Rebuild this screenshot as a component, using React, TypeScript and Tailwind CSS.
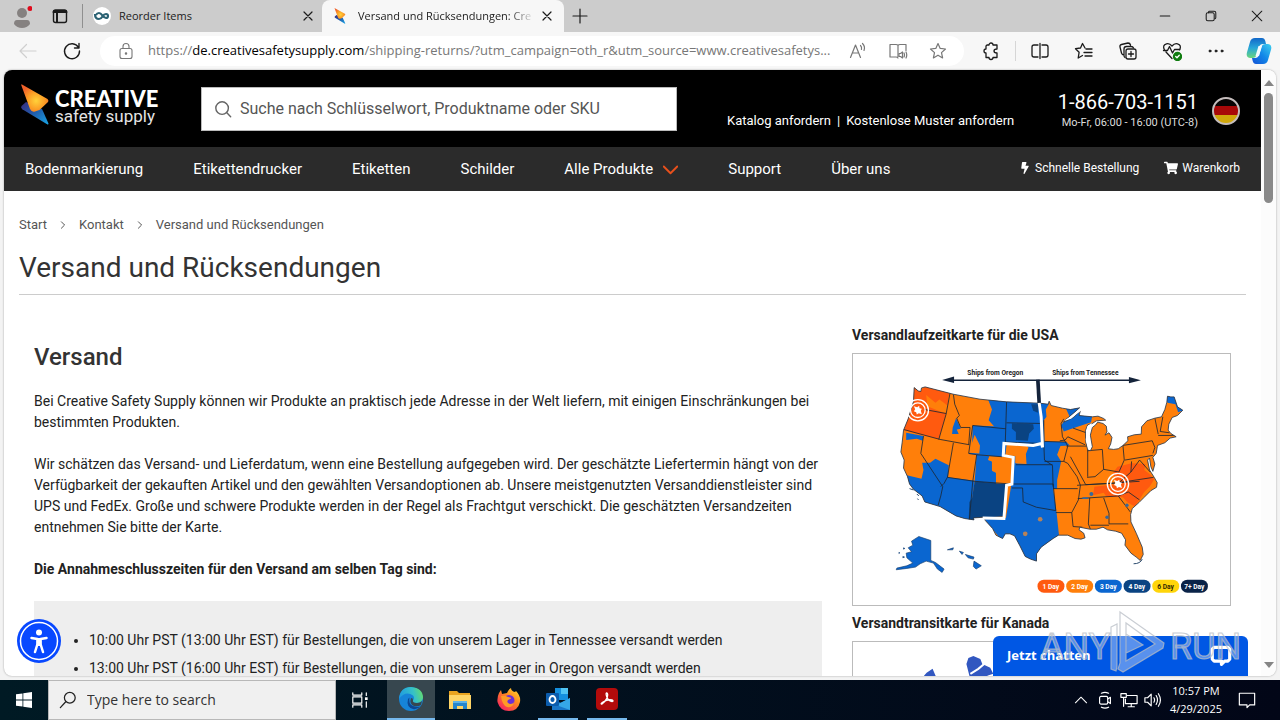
import type { ReactNode } from "react";
import { FaBolt, FaShoppingCart } from "react-icons/fa";

const UI = "font-['Open_Sans','Noto_Sans',sans-serif]";

type GlyphProps = { children: ReactNode; size?: number; width?: number; className?: string };

function Glyph({ children, size = 20, width = 1, className = "" }: GlyphProps) {
  return (
    <svg
      width={size}
      height={size}
      viewBox="0 0 20 20"
      fill="none"
      stroke="currentColor"
      strokeWidth={width}
      strokeLinecap="round"
      strokeLinejoin="round"
      className={`shrink-0 ${className}`}
      aria-hidden="true"
    >
      {children}
    </svg>
  );
}

const STAR = "M10 2.5l2.2 4.9 5.3.6-4 3.6 1.1 5.3-4.6-2.700-4.600 2.700 1.100-5.300-4-3.600 5.300-.600z";

function BrandMark({ className }: { className: string }) {
  return (
    <svg viewBox="0 0 28 41" className={className} aria-hidden="true">
      <defs>
        <radialGradient id="warm" cx="0.55" cy="0.6" r="0.6">
          <stop offset="0" stopColor="#ffd23a" />
          <stop offset="0.55" stopColor="#fb9a24" />
          <stop offset="1" stopColor="#f0612a" />
        </radialGradient>
        <linearGradient id="cool" x1="0" y1="0" x2="1" y2="1">
          <stop offset="0" stopColor="#3a2a7c" />
          <stop offset="0.5" stopColor="#1f5fae" />
          <stop offset="1" stopColor="#18a6e6" />
        </linearGradient>
      </defs>
      <path d="M5 18L0.500 22q-.8 2 .8 3.200L26.500 40.500q1 .4 1-1L21 25z" fill="url(#cool)" />
      <path d="M1 .5q-1-.6-.7.800L9 25q1.800 3.500 5 2.500l4.500-1.500L27 18q1-1.500-.500-3z" fill="url(#warm)" />
    </svg>
  );
}

function TabStrip() {
  return (
    <div className="flex h-8 shrink-0 items-center bg-[#cccccc] text-[#1b1b1b]">
      <button aria-label="Profil" className="relative ml-3 h-5 w-5">
        <svg viewBox="0 0 20 22" className="h-[22px] w-5" aria-hidden="true">
          <circle cx="10" cy="7" r="5" fill="#858180" />
          <path d="M2 18q0-4 3-4h10q3 0 3 4-3 4-8 4t-8-4z" fill="#858180" />
          <circle cx="18" cy="2.500" r="2.500" fill="#e00b1c" />
        </svg>
      </button>
      <button aria-label="Tab-Aktionen" className="ml-[18px]">
        <Glyph width={1.4}>
          <rect x="3.500" y="4" width="13" height="12.500" rx="2" />
          <path d="M3.500 6h13M4 5h12M7 6v10" strokeWidth="2" />
        </Glyph>
      </button>
      <span className="ml-3 h-6 w-px bg-[#8f8f8f]" />
      <div className="ml-2.5 flex h-full w-[229px] items-center pr-1.5 text-[11px]">
        <svg viewBox="0 0 18 18" className="h-[18px] w-[18px]" aria-hidden="true">
          <circle cx="9" cy="9" r="9" fill="#fff" />
          <path d="M2 7q0 5 4 5 2 0 3.500-2.500T13 7q2 0 2 2t-2 2q-1.500 0-3.500-2.500T6 6q-2 0-3 2" fill="none" stroke="#2b6273" strokeWidth="2.200" />
        </svg>
        <span className="ml-2 flex-1">Reorder Items</span>
        <button aria-label="Reorder Items schließen"><Glyph size={16} width={1.5}><path d="M5 5l10 10M15 5L5 15" /></Glyph></button>
      </div>
      <div className="flex h-full w-[242px] items-center rounded-t-lg bg-[#f7f7f7] pr-2 pl-3 text-[11px]">
        <BrandMark className="h-4 w-3" />
        <span className="ml-3 w-[177px] overflow-hidden bg-linear-to-r from-[#1b1b1b] from-85% to-transparent bg-clip-text whitespace-nowrap text-transparent">Versand und Rücksendungen: Cre</span>
        <button aria-label="Tab schließen" className="ml-1"><Glyph size={16} width={1.5}><path d="M5 5l10 10M15 5L5 15" /></Glyph></button>
      </div>
      <button aria-label="Neuer Tab" className="ml-1.5"><Glyph width={1.2}><path d="M10 3v14M3 10h14" /></Glyph></button>
      <div className="ml-auto flex items-center gap-[30px] pr-[15px]">
        <button aria-label="Minimieren"><Glyph size={16} width={1.3}><path d="M4 10h12" /></Glyph></button>
        <button aria-label="Verkleinern"><Glyph size={16} width={1.3}><rect x="4" y="6" width="10" height="10" rx="2" /><path d="M7 6V5q0-1 1-1h6q2 0 2 2v6q0 1-1 1.500" /></Glyph></button>
        <button aria-label="Schließen"><Glyph size={16} width={1.3}><path d="M4 4l12 12M16 4L4 16" /></Glyph></button>
      </div>
    </div>
  );
}

function Toolbar() {
  return (
    <div className="flex h-[38px] shrink-0 items-center bg-[#f7f7f7] pr-2 pl-[18px] text-[#1b1b1b]">
      <button aria-label="Zurück" className="text-[#cfcfcf]"><Glyph width={1.200}><path d="M2 10h16M8.500 3.500L2 10l6.500 6.500" /></Glyph></button>
      <button aria-label="Neu laden" className="ml-6"><Glyph width={1.400}><path d="M16.500 6.500A7.500 7.500 0 1017.500 10M17 2.500v4.500h-4.500" /></Glyph></button>
      <div className="ml-[18px] flex h-[30px] min-w-0 flex-1 items-center rounded-full bg-white pr-4 pl-4 text-[#777]">
        <Glyph width={1.100}><rect x="4" y="7.500" width="12" height="10" rx="2" /><path d="M7 7.500V5.500a3 3 0 016 0v2" /><circle cx="10" cy="12.500" r=".7" fill="currentColor" /></Glyph>
        <div className="ml-3 min-w-0 flex-1 text-[13px] whitespace-nowrap">
          https://<span className="text-black">de.creativesafetysupply.com</span>/shipping-returns/?utm_campaign=oth_r&amp;utm_source=www.creativesafetys...
        </div>
        <div className="ml-3 flex items-center gap-5">
          <button aria-label="Laut vorlesen"><Glyph width={1.200}><path d="M2.500 16.500L7.500 4l5 12.500M4.500 12h6M12.500 4.500q1.500 1.500 1 4M14.500 2.500q3 3 1.500 7" /></Glyph></button>
          <button aria-label="Plastischer Reader"><Glyph width={1.200}><path d="M10 4.500v11M10 4.500Q9.500 3.500 8 3.500H2v12.500h6q1.500 0 2 1M10 4.500q.5-1 2-1h6v6" /><path d="M11 12.500h1.500l2-1.500v6l-2-1.500H11zM16 12q1 2 0 4M18 11q1.500 3 0 6" /></Glyph></button>
          <button aria-label="Zu Favoriten hinzufügen"><Glyph width={1.200}><path d={STAR} /></Glyph></button>
        </div>
      </div>
      <div className="ml-[17px] flex items-center">
        <button aria-label="Erweiterungen"><Glyph width={1.300}><path d="M6 4h2a2 2 0 014 0h4v4q-3 0-3 2t3 2v4.500h-4a2 2 0 01-4 0H5V12a2 2 0 010-4V5z" /></Glyph></button>
        <span className="ml-3.5 h-5 w-px bg-[#d6d6d6]" />
        <button aria-label="Geteilter Bildschirm" className="ml-3.5"><Glyph width={1.300}><path d="M8 4H4q-2 0-2 2v8q0 2 2 2h4M12 4h4q2 0 2 2v8q0 2-2 2h-4M10 2.500v15" /></Glyph></button>
        <button aria-label="Favoriten" className="ml-6"><Glyph width={1.300}><path d="M11 7L8.500 2.500 6.500 7l-5 .7 3.600 3.600L4.200 17l4.300-2.500M12 8h6M10 11.500h8M11 15h7" /></Glyph></button>
        <button aria-label="Sammlungen" className="ml-6"><Glyph width={1.300}><path d="M6 14q-2 0-2.500-2L2 6q-.5-2 1.500-2.500L10 2q2 0 2.500 2M7 16.500q-1-.5-1-2V8q0-2.500 2.500-2.500H13q2 0 2.500 1.500" /><rect x="8" y="8" width="10" height="10" rx="2" /><path d="M13 10.500v5M10.500 13h5" /></Glyph></button>
        <button aria-label="Browser-Essentials" className="ml-6">
          <Glyph width={1.300}><path d="M2.500 9Q0 4 4.500 2.800 7.500 2 10 5q2.500-3 5.500-2.200Q20 4 17.500 9M4 11l6 6.500M1.500 9.500h4l2-4 3 6.500 2-3.500H18" /><circle cx="15.500" cy="15.500" r="4" fill="#107c10" stroke="#107c10" /><path d="M13.700 15.500l1.300 1.300 2.300-2.600" stroke="#fff" /></Glyph>
        </button>
        <button aria-label="Einstellungen und mehr" className="ml-6"><Glyph><g fill="currentColor"><circle cx="4" cy="10" r="1" /><circle cx="10" cy="10" r="1" /><circle cx="16" cy="10" r="1" /></g></Glyph></button>
        <button aria-label="Copilot" className="ml-5">
          <svg viewBox="0 0 26 28" className="h-7 w-[26px]" aria-hidden="true">
            <defs>
              <linearGradient id="co1" x1="0" y1="0" x2="0" y2="1"><stop offset="0" stopColor="#1267c9" /><stop offset=".5" stopColor="#27a7d9" /><stop offset="1" stopColor="#6bd67c" /></linearGradient>
              <linearGradient id="co2" x1="1" y1="0" x2="0" y2="1"><stop offset="0" stopColor="#3fd0ee" /><stop offset=".5" stopColor="#1287e8" /><stop offset="1" stopColor="#1453d6" /></linearGradient>
            </defs>
            <path d="M9 1h7q2.500 0 3.300 3L20 7h-3q-3 0-4 3l-2.500 8q-.8 3-4 3H4q-4-.5-3.200-5L4 5q1-4 5-4z" fill="url(#co1)" />
            <path d="M17 27h-7q-2.500 0-3.300-3L6 21h3q3 0 4-3l2.500-8q.8-3 4-3H22q4 .5 3.200 5L22 23q-1 4-5 4z" fill="url(#co2)" />
            <path d="M12.500 9h3.500l-3 10h-3.500z" fill="#f4fbff" />
          </svg>
        </button>
      </div>
    </div>
  );
}

const NAV = ["Bodenmarkierung", "Etikettendrucker", "Etiketten", "Schilder", "Alle Produkte", "Support", "Über uns"];

function SiteHeader() {
  return (
    <header className="text-white">
      <div className="flex h-[77px] bg-black pr-[21px] pl-[17px]">
        <a href="#start" aria-label="Creative Safety Supply" className="mt-3.5 flex h-[42px] w-[180px] shrink-0">
          <BrandMark className="h-[41px] w-7" />
          <span className="mt-1 ml-1.5 flex flex-col">
            <span className="font-['Lato',sans-serif] text-[22px] leading-[22px] font-black">CREATIVE</span>
            <span className="text-[17px] leading-[13px] text-[#e4e4e4]">safety supply</span>
          </span>
        </a>
        <label className="mt-[17px] flex h-11 max-w-[476px] flex-1 items-center border border-[#bbb] bg-white pl-3 text-[#666]">
          <Glyph size={18} width={1.600}><circle cx="9" cy="9" r="7" /><path d="M14 14l4.500 4.500" /></Glyph>
          <span className="sr-only">Suche</span>
          <input type="search" placeholder="Suche nach Schlüsselwort, Produktname oder SKU" className="ml-2 flex-1 bg-transparent text-base text-black outline-none placeholder:text-[#555]" />
        </label>
        <div className="mt-[43px] ml-[50px] flex gap-1.5 text-[13px] leading-4">
          <a href="#katalog">Katalog anfordern</a>
          <span>|</span>
          <a href="#muster">Kostenlose Muster anfordern</a>
        </div>
        <div className="mt-5 ml-auto text-right">
          <div className="text-xl leading-6">1-866-703-1151</div>
          <div className="text-[11px] leading-[18px] text-[#ddd]">Mo-Fr, 06:00 - 16:00 (UTC-8)</div>
        </div>
        <button aria-label="Deutsch" className="mt-[27px] ml-3.5 h-7 w-7 shrink-0">
          <svg viewBox="0 0 28 28" className="h-7 w-7" aria-hidden="true">
            <clipPath id="flag"><circle cx="14" cy="14" r="13" /></clipPath>
            <g clipPath="url(#flag)"><path d="M0 0h28v9H0z" fill="#080404" /><path d="M0 9h28v9H0z" fill="#a80808" /><path d="M0 18h28v10H0z" fill="#d0a70a" /></g>
            <circle cx="14" cy="14" r="13" fill="none" stroke="#c4bcbc" strokeWidth="2" />
          </svg>
        </button>
      </div>
      <nav className="flex h-11 items-center justify-between bg-[#2b2b2b] pr-[21px] pl-[21px]">
        <ul className="flex items-center gap-[50px] text-[15px]">
          {NAV.map((item) => (
            <li key={item}>
              <a href="#nav" className="flex items-center">
                {item}
                {item === "Alle Produkte" && <Glyph size={15} width={2.500} className="ml-2.5 text-[#e8501c]"><path d="M1 6l9 9 9-9" /></Glyph>}
              </a>
            </li>
          ))}
        </ul>
        <div className="flex gap-[25px] pb-0.5 text-xs">
          <a href="#schnell" className="flex items-center gap-1"><FaBolt className="h-3 w-3" />Schnelle Bestellung</a>
          <a href="#warenkorb" className="flex items-center gap-1"><FaShoppingCart className="h-3.5 w-3.5" />Warenkorb</a>
        </div>
      </nav>
    </header>
  );
}

const US =
  "M222 202L234 212 242 214 244 203 255 200 340 222 420 237 500 245 600 249 625 252 628 243 634 256 668 264 692 268 720 263 700 280 676 300 672 306 700 292 722 272 718 286 758 290 775 288 792 295 798 300 770 302 758 310 744 314 737 332 738 365 744 390 752 392 758 380 752 345 758 322 768 314 774 306 790 310 800 318 802 335 796 345 808 338 817 352 813 372 806 386 822 388 836 386 850 376 865 362 864 350 884 344 905 342 906 320 922 302 946 294 966 290 976 268 982 246 984 228 994 230 1004 230 1014 260 1030 270 1014 286 998 292 988 312 986 330 994 340 1010 350 992 354 976 368 954 376 950 400 940 412 946 432 940 454 934 440 930 414 924 420 930 450 944 472 953 488 951 502 934 512 914 532 898 548 878 566 873 584 874 606 890 640 908 682 911 704 902 722 890 712 874 700 856 676 858 660 846 640 828 634 804 630 790 622 770 628 750 628 720 622 718 630 732 640 736 654 724 658 706 656 684 646 656 646 640 656 604 682 590 702 590 724 572 718 556 710 540 678 524 648 510 642 496 642 488 656 468 646 458 626 436 602 432 592 400 594 402 600 374 596 348 588 300 560 254 546 246 528 220 508 208 492 202 470 190 444 192 420 182 396 186 366 190 330 204 296 220 244z";

const BLUE = [
  "M442 232L500 240 604 246 628 250 618 268 620 290 612 300 614 364 680 366 690 376 662 378 652 404 664 424 656 462 652 480 652 506 640 506 650 575 658 650 590 730 540 720 484 660 430 594 498 594 514 496 468 490 468 458 456 452 456 424 444 420 448 406 386 402 396 384 398 316 462 318 446 300 456 268z",
  "M246 428L270 428 286 416 326 436 324 472 404 482 388 604 340 594 250 550 200 500 200 466 244 476 250 450z",
  "M410 402L448 408 446 420 456 424 456 452 468 458 470 492 404 484z",
  "M198 338L250 348 248 362 230 356 198 360z",
  "M348 294L358 316 362 326 350 328 356 342 336 342 338 322z",
  "M678 264L722 258 718 282 758 286 754 306 700 324 672 334 664 316 674 300 690 290z",
  "M976 220L1012 222 1034 270 1016 276 1008 252 984 248z",
];

const RED = [
  "M215 195L240 212 256 196 328 216 322 256 298 238 286 248 258 224 262 258 300 274 318 280 296 358 184 328 220 250z",
  "M834 440L876 430 918 432 914 450 930 462 944 478 930 500 914 516 886 560 864 548 850 532 800 530 792 518 760 526 764 500 832 492 820 458z",
];

const STATE_LINES =
  "M254 268L318 280M330 218L318 282 296 358M190 328L300 358 388 374M250 348L242 400 308 500 302 528 294 556M340 368L322 472 404 484 514 492M322 472L312 490 302 500M340 222L344 252 358 286 350 294 362 322 390 322 386 374M398 316L498 326M500 245L496 370M398 316L386 400 410 404 486 410M410 404L398 486 388 600M500 308L608 310M498 366L600 370M614 364L680 366M612 300V372L614 420 638 436 640 500M528 434H638M516 492H640L648 572M516 504H548L550 546 590 562 648 572M614 424L672 424 684 378 668 350 664 310 672 296M672 424L684 430 712 470 722 496 716 540 696 578 700 620 728 622M640 506H714M648 578H696M680 378H744M744 390L744 470M692 410L738 494 824 490 942 472M712 496L900 484M714 536L836 528 872 576M750 534L746 612 752 628M792 534L808 580 808 612 866 612M752 616H808M744 392L788 388M788 388L792 448 766 470 742 472M792 448L838 456 854 420 850 376 938 362 946 382 940 400M856 420L940 406M876 424L874 456 834 492M874 456L900 420 932 456M836 528L866 516 900 540M946 294L956 342M970 290L962 334 990 338M956 346L1006 346M660 362L676 360 684 350 736 374M700 324L740 338";

const LEGEND = [
  { label: "1 Day", fill: "#ff5a0f", text: "#fff" },
  { label: "2 Day", fill: "#ff7f0a", text: "#fff" },
  { label: "3 Day", fill: "#0a66d0", text: "#fff" },
  { label: "4 Day", fill: "#0a4382", text: "#fff" },
  { label: "6 Day", fill: "#ffd50a", text: "#332b00" },
  { label: "7+ Day", fill: "#0a2348", text: "#fff" },
];

function Target({ x, y }: { x: number; y: number }) {
  return (
    <g transform={`translate(${x} ${y})`} fill="none" stroke="#fff" strokeWidth="4">
      <circle r="32" />
      <circle r="22" />
      <path d="M-12 -12L-2 -9 4 -13 5 -6 12 -4 9 2 12 12 3 9 -3 13 -5 6 -12 3 -8 -3z" fill="#fff" stroke="none" />
    </g>
  );
}

function UsMap() {
  return (
    <svg viewBox="38 101 1134 756" className="block w-full font-['Roboto',sans-serif]" role="img" aria-label="Versandlaufzeitkarte für die USA">
      <clipPath id="us"><path d={US} /></clipPath>
      <path d={US} fill="#ff7f0a" />
      <g clipPath="url(#us)">
        {BLUE.map((d) => <path key={d} d={d} fill="#0a66d0" />)}
        {RED.map((d) => <path key={d} d={d} fill="#ff5a0f" />)}
        <path d="M404 484L500 492 490 590 404 594 402 606 386 600 388 546 396 536z" fill="#0a4382" />
        <path d="M516 310L580 312 582 326 568 340 564 362 528 360 528 336 516 326zM574 252L598 252 594 278 580 272z" fill="#0a4382" />
        <path d="M500 374L556 374 566 382 558 402 560 432 526 430 526 408 496 406zM386 398L404 344 420 376 418 400z" fill="#ff7f0a" />
        <path d="M448 408L518 412 514 492 468 490 468 458 456 452 456 424 444 420z" fill="#ff7f0a" />
        <path d={STATE_LINES} fill="none" stroke="#1d2733" strokeWidth="2.500" />
        <g fill="#38699b"><circle cx="755" cy="522" r="6" /><circle cx="802" cy="592" r="5" /><circle cx="862" cy="556" r="5" /><path d="M728 532h18v5h-18z" /></g>
        <g fill="#b58259"><circle cx="601" cy="598" r="7" /><circle cx="556" cy="642" r="7" /></g>
      </g>
      <path d={US} fill="none" stroke="#28384b" strokeWidth="2.500" />
      <path d="M672 302L692 290 708 276 720 264 724 272 708 284 694 296zM742 320L756 308 748 340 752 370 746 386 738 360z" fill="#fff" />
      <path d="M598 248L604 290 608 382 606 370 580 376 492 370 490 406 520 412 516 492 500 496 492 596 428 594" fill="none" stroke="#fff" strokeWidth="9" />
      <path d="M330 180H884" fill="none" stroke="#14233a" strokeWidth="5" />
      <path d="M594 178L598 248" stroke="#14233a" strokeWidth="11" />
      <path d="M306 179L342 169V188zM904 180L868 170V189z" fill="#14233a" />
      <g fill="#222" fontSize="20" fontWeight="700"><text x="382" y="164">Ships from Oregon</text><text x="637" y="164">Ships from Tennessee</text></g>
      <Target x={233} y={270} />
      <Target x={835} y={492} />
      <g fill="#0a66d0" stroke="#17406e" strokeWidth="2">
        <path d="M214 664L236 650 272 662V722L286 728 312 748 306 758 292 748 280 730 258 724 240 732 226 742 200 746 168 750 170 745 200 738 218 730 200 714 198 700 214 696 204 684 218 676z" />
        <path d="M402 724L424 738 408 748 400 740zM376 704L402 712 400 718 384 714zM358 694L370 698 366 704zM322 690L340 684 338 690zM190 684l4 2-4 2zM176 698l3 1-3 2zM188 710l5 2-5 2z" />
      </g>
      <path d="M208 506l12 4M230 522l6 6M232 536l3 4M882 732q20 0 26-14" fill="none" stroke="#28486b" strokeWidth="3" />
      {LEGEND.map((l, i) => (
        <g key={l.label}>
          <rect x={593 + i * 86.300} y="780" width="81" height="39" rx="19" fill={l.fill} />
          <text x={633 + i * 86.300} y="807" textAnchor="middle" fontSize="20" fontWeight="700" fill={l.text}>{l.label}</text>
        </g>
      ))}
    </svg>
  );
}

function Content() {
  return (
    <main className="px-[15px] text-[#222]">
      <nav aria-label="Brotkrumen" className="flex items-center pt-[26px] text-[13px] leading-4 text-[#555]">
        <a href="#start">Start</a>
        <Glyph size={8} width={2.500} className="mx-3"><path d="M6 2l8 8-8 8" /></Glyph>
        <a href="#kontakt">Kontakt</a>
        <Glyph size={8} width={2.500} className="mx-3"><path d="M6 2l8 8-8 8" /></Glyph>
        <span>Versand und Rücksendungen</span>
      </nav>
      <h1 className="mt-[17px] border-b border-[#ccc] pb-2 text-[28px] leading-9 text-[#333]">Versand und Rücksendungen</h1>
      <div className="flex pt-[30px]">
        <section className="w-2/3 px-[15px] text-sm leading-[21px]">
          <h2 className="mt-4 mb-[18px] text-2xl leading-8 font-medium text-[#333]">Versand</h2>
          <p className="mb-[21px]">Bei Creative Safety Supply können wir Produkte an praktisch jede Adresse in der Welt liefern, mit einigen Einschränkungen bei bestimmten Produkten.</p>
          <p className="mb-[21px]">Wir schätzen das Versand- und Lieferdatum, wenn eine Bestellung aufgegeben wird. Der geschätzte Liefertermin hängt von der Verfügbarkeit der gekauften Artikel und den gewählten Versandoptionen ab. Unsere meistgenutzten Versanddienstleister sind UPS und FedEx. Große und schwere Produkte werden in der Regel als Frachtgut verschickt. Die geschätzten Versandzeiten entnehmen Sie bitte der Karte.</p>
          <p className="mb-[21px] font-bold">Die Annahmeschlusszeiten für den Versand am selben Tag sind:</p>
          <ul className="list-disc bg-[#eeeeee] pt-[25px] pb-[25px] pl-[55px] leading-7">
            <li>10:00 Uhr PST (13:00 Uhr EST) für Bestellungen, die von unserem Lager in Tennessee versandt werden</li>
            <li>13:00 Uhr PST (16:00 Uhr EST) für Bestellungen, die von unserem Lager in Oregon versandt werden</li>
          </ul>
        </section>
        <aside className="w-1/3 px-[15px]">
          <h3 className="mb-2 text-sm leading-5 font-bold">Versandlaufzeitkarte für die USA</h3>
          <div className="border border-[#bbb]"><UsMap /></div>
          <h3 className="mt-[7px] mb-2 text-sm leading-5 font-bold">Versandtransitkarte für Kanada</h3>
          <div className="border border-[#bbb]">
            <svg viewBox="0 0 379 253" className="block w-full" role="img" aria-label="Versandtransitkarte für Kanada">
              <path d="M66 40l8-9 6-4 3 7 5 3 9-2v8zM114 22l2-6 5-2 7 3 2 5 8 4 3 6-6 2 4 6-7-5-7 4-8-5z" fill="#3157c0" />
              <path d="M118 32l8-5 7-6" stroke="#fff" strokeWidth="2" fill="none" />
            </svg>
          </div>
        </aside>
      </div>
    </main>
  );
}

function ChatWidget() {
  return (
    <button className="absolute right-7 bottom-0 flex h-10 w-[255px] items-center justify-between rounded-t-md bg-[#0057e4] pr-4 pl-3.5 text-white">
      <span className={`text-[13px] font-bold ${UI}`}>Jetzt chatten</span>
      <svg viewBox="0 0 24 24" className="h-[22px] w-[22px]" fill="none" stroke="currentColor" strokeWidth="3.500" strokeLinejoin="round" aria-hidden="true">
        <path d="M4.500 2.500h15l2 2v11l-2 2h-3.500L12.500 21v-3.500h-8l-2-2v-11z" />
      </svg>
    </button>
  );
}

function AccessibilityButton() {
  return (
    <button aria-label="Barrierefreiheit" className="absolute bottom-[13px] left-[13px] h-11 w-11">
      <svg viewBox="0 0 44 44" className="h-11 w-11" aria-hidden="true">
        <circle cx="22" cy="22" r="22" fill="#0848ff" />
        <circle cx="22" cy="22" r="18.500" fill="none" stroke="#fff" strokeWidth="1.500" />
        <circle cx="22" cy="13.500" r="3" fill="#fff" />
        <path d="M14.500 19l6 1v5l-2.500 8M29.500 19l-6 1v5l2.500 8" fill="none" stroke="#fff" strokeWidth="2.500" strokeLinecap="round" strokeLinejoin="round" />
        <path d="M19.500 19h5v8h-5z" fill="#fff" />
      </svg>
    </button>
  );
}

function Watermark() {
  return (
    <svg viewBox="0 0 200 64" className="pointer-events-none absolute right-10 bottom-[46px] h-16 w-[200px]" aria-hidden="true">
      <g fill="#ffffff" fillOpacity=".35" stroke="#b7bcc4" strokeOpacity=".75" strokeWidth="1.200">
        <text x="0" y="49" fontFamily="'Liberation Sans Narrow', Roboto, sans-serif" fontSize="36">ANY</text>
        <text x="130" y="49" fontFamily="'Liberation Sans Narrow', Roboto, sans-serif" fontSize="36">RUN</text>
        <path fillRule="evenodd" d="M71 17l6-3v43l-1 4-5-2zM80 2l44 31-1 5-40 24-5-3 2-6V2zM86 13v38l29-17zM86 24l17 11-17 8z" />
      </g>
    </svg>
  );
}

function TaskbarIcons() {
  return (
    <>
      <button aria-label="Aktive Anwendungen" className="flex h-10 w-[51px] items-center justify-center pr-1 text-white">
        <Glyph size={18} width={1.300}><path d="M2 2v2.500h10V2M2 18v-2.500h10V18" /><rect x="2" y="6.500" width="10" height="7" /><path d="M17 2v3M17 12v6" /><path d="M15.500 7h3v3h-3z" fill="currentColor" stroke="none" /></Glyph>
      </button>
      <button aria-label="Microsoft Edge" className="flex h-10 w-12 items-center justify-center border-b-2 border-[#76b9ed] bg-[#37474f]">
        <svg viewBox="0 0 24 24" className="h-6 w-6" aria-hidden="true">
          <defs><linearGradient id="edge" x1="0" y1=".5" x2="1" y2=".3"><stop offset="0" stopColor="#1f9ae0" /><stop offset=".6" stopColor="#35c1c8" /><stop offset="1" stopColor="#66dc6a" /></linearGradient></defs>
          <circle cx="12" cy="12" r="12" fill="#1684d8" />
          <path d="M0 12Q1 0 12 0q12 1 12 11-1 5-7 5-4 0-3-2.500 2-2.500 0-5Q9 5 4 8 1 10 0 12z" fill="url(#edge)" />
          <path d="M9 12q-2 8 5 10 4 1 8-3-3 2-8 0-5-2-3.500-8.500z" fill="#0d4792" />
          <path d="M12 11q2 0 2 2-1 3 4 3 3 0 5-2l-1 4q-3 2-7 1-5-2-3-8z" fill="#37474f" />
        </svg>
      </button>
      <button aria-label="Explorer" className="flex h-10 w-[49px] items-center justify-center">
        <svg viewBox="0 0 24 22" className="h-[22px] w-6" aria-hidden="true"><path d="M1 2h8l2 2h11v5H1z" fill="#eaa41f" /><path d="M1 6h22v14H1z" fill="#ffd566" /><path d="M5 20v-8h14v8h-4v-3H9v3z" fill="#2686cc" /><path d="M5 12h14v2H5z" fill="#5eb3e7" /></svg>
      </button>
      <button aria-label="Firefox" className="flex h-10 w-[50px] items-center justify-center">
        <svg viewBox="0 0 24 24" className="h-6 w-6" aria-hidden="true">
          <defs><linearGradient id="fox" x1="1" y1="0" x2=".2" y2="1"><stop offset="0" stopColor="#ffe234" /><stop offset=".45" stopColor="#ff8a1e" /><stop offset="1" stopColor="#f51e63" /></linearGradient></defs>
          <path d="M2 5l2-3 1 4 5-1q1-3 4-5 0 3 4 4l1-1q5 5 4 11-2 9-11 9T.500 14Q0 9 2 5z" fill="url(#fox)" />
          <circle cx="12" cy="12.500" r="5.500" fill="#6b2fd6" />
          <path d="M4 8q4-1 7 1 3 0 3 1.500l-3 1.500q-2 3 2 4 4 0 4-3 0 7-7 6-5-2-6-11z" fill="#ff9b25" />
        </svg>
      </button>
      <button aria-label="Outlook" className="ml-1 flex h-10 w-10 items-center justify-center border-b-2 border-[#76b9ed]">
        <svg viewBox="0 0 24 22" className="h-[22px] w-6" aria-hidden="true"><path d="M9 0h13v12H9z" fill="#1490df" /><path d="M15 0h7v6h-7z" fill="#50c4f3" /><path d="M6 11l9 4 9-5v12H6z" fill="#1976c8" /><path d="M24 10v12L10 17z" fill="#35a7e7" /><rect y="5" width="13" height="13" rx="1" fill="#0b5cad" /><ellipse cx="6.500" cy="11.500" rx="3" ry="3.500" fill="none" stroke="#fff" strokeWidth="1.800" /></svg>
      </button>
      <button aria-label="Acrobat Reader" className="ml-[9px] flex h-10 w-10 items-center justify-center border-b-2 border-[#76b9ed]">
        <svg viewBox="0 0 22 22" className="h-[22px] w-[22px]" aria-hidden="true"><rect width="22" height="22" rx="4" fill="#b30b0b" /><path d="M10.500 5q2 0 .5 5-2 4-5 6-2 0 1-2 5-3 9-2 2 1 0 1.500-3 0-5-4-1.500-4-.5-4.500z" fill="none" stroke="#fff" strokeWidth="1.400" /></svg>
      </button>
    </>
  );
}

function Taskbar() {
  return (
    <footer className={`flex h-10 shrink-0 items-center bg-linear-to-r from-[#001a24] to-[#020617] ${UI}`}>
      <button aria-label="Start" className="flex h-10 w-12 items-center justify-center">
        <svg viewBox="0 0 16 16" className="h-4 w-4" fill="#fff" aria-hidden="true"><path d="M0 2.300L6.500 1.400V7.600H0zM7.300 1.300L16 0v7.600H7.300zM0 8.400h6.500v6.200L0 13.700zM7.300 8.400H16V16l-8.700-1.300z" /></svg>
      </button>
      <label className="flex h-10 w-[288px] items-center border border-[#b8b8b8] bg-[#f0f0f0] pl-2.5 text-[#222]">
        <Glyph size={18} width={1.400}><circle cx="12" cy="7.500" r="6" /><path d="M7.500 12L1.500 18.500" /></Glyph>
        <span className="sr-only">Suche</span>
        <input placeholder="Type here to search" className="ml-2.5 w-full bg-transparent text-sm outline-none placeholder:text-[#333]" />
      </label>
      <TaskbarIcons />
      <div className="ml-auto flex items-center text-white">
        <Glyph size={14} width={1.500}><path d="M2 14l8-8 8 8" /></Glyph>
        <Glyph size={18} width={1.300} className="ml-2"><rect x="4" y="6" width="9" height="8.500" rx="1.500" /><path d="M13 9l3-2v7l-3-2M6 2.500q4-2 8 0M6 18q4 2 8 0" /></Glyph>
        <Glyph size={18} width={1.300} className="ml-1.5"><path d="M8 5h11v9H6V9M12.500 14v3M9 17.500h7" /><path d="M1 3h6v4H1zM4 7v10" /></Glyph>
        <Glyph size={18} width={1.300} className="ml-1.5"><path d="M1 7.500h3l4-4v13l-4-4H1zM11 7.500q1.500 2.500 0 5M13.500 5q3 5 0 10M16 3q4.500 7 0 14" /></Glyph>
        <div className="ml-2 text-center text-[11px] leading-[18px] whitespace-nowrap"><div>10:57 PM</div><div>4/29/2025</div></div>
        <button aria-label="Benachrichtigungen" className="mr-6 ml-4"><Glyph size={18} width={1.300}><path d="M1.500 2.500h17v13H13L10 18.500V15.500H1.500z" /></Glyph></button>
      </div>
    </footer>
  );
}

export default function App() {
  return (
    <div className="relative flex h-screen flex-col overflow-hidden bg-[#f3f3f3] font-['Roboto',sans-serif]">
      <div className={UI}>
        <TabStrip />
        <Toolbar />
      </div>
      <div className="relative mx-1 mb-1 flex min-h-0 flex-1 overflow-hidden rounded-lg bg-white shadow-[0_0_2px_#999]">
        <div className="min-w-0 flex-1 overflow-hidden">
          <SiteHeader />
          <Content />
        </div>
        <div className="flex w-[15px] shrink-0 flex-col items-center bg-[#fcfcfc] pt-2.5 pb-2" aria-hidden="true">
          <svg viewBox="0 0 10 6" className="h-1.5 w-2.5" fill="#858585"><path d="M0 6l5-6 5 6z" /></svg>
          <span className="mt-[7px] h-[110px] w-[9px] rounded-full bg-[#8a8a8a]" />
          <svg viewBox="0 0 10 6" className="mt-auto h-1.5 w-2.5" fill="#858585"><path d="M0 0l5 6 5-6z" /></svg>
        </div>
        <AccessibilityButton />
        <ChatWidget />
      </div>
      <Taskbar />
      <Watermark />
    </div>
  );
}
